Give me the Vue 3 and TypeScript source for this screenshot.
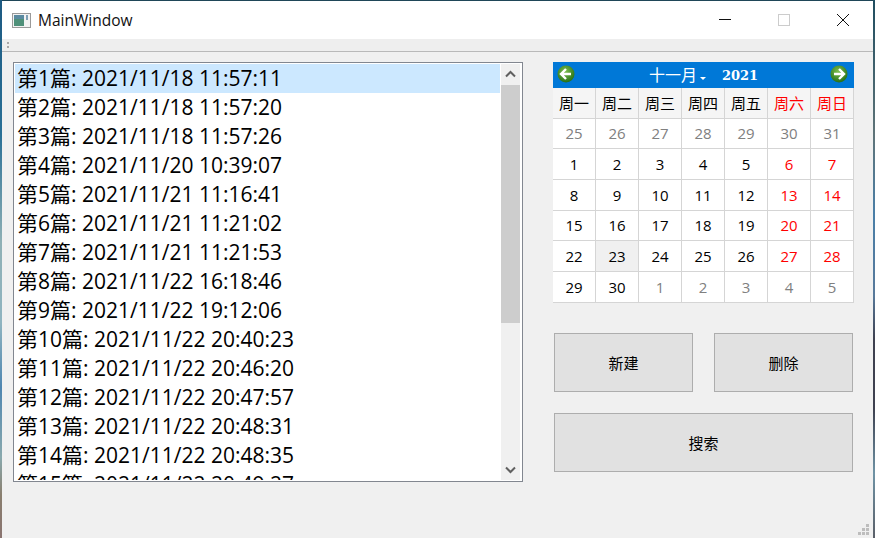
<template>
  <div class="desktop">
    <div class="window">
      <div class="titlebar">
        <svg class="app-icon" width="19" height="15" viewBox="0 0 19 15">
          <rect x="0.5" y="0.5" width="18" height="14" fill="#f2f2f2" stroke="#9a9a9a" />
          <rect x="2" y="2" width="10" height="11" fill="#4f9079" />
          <rect x="2" y="2" width="10" height="4" fill="#5a8aa0" />
          <rect x="14" y="2" width="2" height="5" fill="#7fa0b5" />
        </svg>
        <span class="title">MainWindow</span>
        <div class="controls">
          <svg class="ctl" width="46" height="38" viewBox="0 0 46 38">
            <line x1="17" y1="18.5" x2="29" y2="18.5" stroke="#111" />
          </svg>
          <svg class="ctl" width="46" height="38" viewBox="0 0 46 38">
            <rect x="17.5" y="13.5" width="11" height="11" fill="none" stroke="#ccc" />
          </svg>
          <svg class="ctl" width="46" height="38" viewBox="0 0 46 38">
            <path d="M17 13 L29 25 M29 13 L17 25" stroke="#111" fill="none" />
          </svg>
        </div>
      </div>
      <div class="toolbar">
        <span class="grip"><i></i><i></i></span>
      </div>

      <div class="content">
        <div class="list">
          <div class="rows">
            <div v-for="(row, i) in rows" :key="i" class="row" :class="{ selected: i === 0 }">{{ row }}</div>
          </div>
          <div class="scrollbar">
            <svg class="arrow" width="19" height="21" viewBox="0 0 19 21">
              <path d="M5 12.5 L9.5 8 L14 12.5" fill="none" stroke="#606060" stroke-width="2" />
            </svg>
            <div class="track"><div class="thumb"></div></div>
            <svg class="arrow" width="19" height="21" viewBox="0 0 19 21">
              <path d="M5 8.5 L9.5 13 L14 8.5" fill="none" stroke="#606060" stroke-width="2" />
            </svg>
          </div>
        </div>

        <div class="side">
          <div class="calendar">
            <div class="cal-head">
              <svg width="18" height="18" viewBox="0 0 18 18">
                <defs>
                  <radialGradient id="ball" cx="0.45" cy="0.35" r="0.7">
                    <stop offset="0" stop-color="#7fc04f" />
                    <stop offset="1" stop-color="#1f6a12" />
                  </radialGradient>
                </defs>
                <circle cx="9" cy="9" r="8.5" fill="url(#ball)" />
                <path d="M9 4 L4 9 L9 14 M4.5 9 H14" fill="none" stroke="#fff" stroke-width="2.4" />
              </svg>
              <div class="month-year">
                <span class="month">十一月</span>
                <span class="caret"></span>
                <span class="year">2021</span>
              </div>
              <svg width="18" height="18" viewBox="0 0 18 18">
                <circle cx="9" cy="9" r="8.5" fill="url(#ball)" />
                <path d="M9 4 L14 9 L9 14 M13.5 9 H4" fill="none" stroke="#fff" stroke-width="2.4" />
              </svg>
            </div>
            <div class="cal-grid">
              <div v-for="(d, i) in weekdays" :key="d" class="cell head" :class="{ red: i > 4 }">{{ d }}</div>
              <div
                v-for="(c, i) in cells"
                :key="`c-${i}`"
                class="cell"
                :class="{ muted: c.muted, red: !c.muted && i % 7 > 4, today: c.today }"
              >{{ c.day }}</div>
            </div>
          </div>

          <div class="buttons">
            <button class="btn">新建</button>
            <button class="btn">删除</button>
            <button class="btn wide">搜索</button>
          </div>
        </div>
      </div>

      <svg class="sizegrip" width="12" height="12" viewBox="0 0 12 12" fill="#bdbdbd">
        <rect x="8" y="0" width="3" height="3" />
        <rect x="4" y="4" width="3" height="3" />
        <rect x="8" y="4" width="3" height="3" />
        <rect x="0" y="8" width="3" height="3" />
        <rect x="4" y="8" width="3" height="3" />
        <rect x="8" y="8" width="3" height="3" />
      </svg>
    </div>
  </div>
</template>

<script setup lang="ts">
interface Cell {
  day: number;
  muted: boolean;
  today: boolean;
}

const times = [
  '2021/11/18 11:57:11',
  '2021/11/18 11:57:20',
  '2021/11/18 11:57:26',
  '2021/11/20 10:39:07',
  '2021/11/21 11:16:41',
  '2021/11/21 11:21:02',
  '2021/11/21 11:21:53',
  '2021/11/22 16:18:46',
  '2021/11/22 19:12:06',
  '2021/11/22 20:40:23',
  '2021/11/22 20:46:20',
  '2021/11/22 20:47:57',
  '2021/11/22 20:48:31',
  '2021/11/22 20:48:35',
  '2021/11/22 20:49:27',
];
const rows = times.map((t, i) => `第${i + 1}篇: ${t}`);

const weekdays = ['周一', '周二', '周三', '周四', '周五', '周六', '周日'];

const cells: Cell[] = [];
for (const d of [25, 26, 27, 28, 29, 30, 31]) cells.push({ day: d, muted: true, today: false });
for (let d = 1; d <= 30; d++) cells.push({ day: d, muted: false, today: d === 23 });
for (const d of [1, 2, 3, 4, 5]) cells.push({ day: d, muted: true, today: false });
</script>

<style>
html,
body {
  margin: 0;
  overflow: hidden;
}
</style>

<style scoped>
.desktop {
  width: 875px;
  height: 538px;
  padding: 1px 2px 0;
  box-sizing: border-box;
  background:
    linear-gradient(180deg, #1d5a82 0%, #2a7096 25%, #8fb0b5 45%, #8fb4c0 60%, #4f86b0 72%, #8aa9ad 85%, #8a7f6f 92%, #8a7470 100%) left / 2px 100% no-repeat,
    linear-gradient(180deg, #1f4d60 0%, #5f7478 25%, #4a7fa8 40%, #58799a 55%, #3e4150 63%, #3e4150 76%, #6f93a5 88%, #5a5f68 100%) right / 2px 100% no-repeat,
    #1f4658;
  font-family: "Open Sans", "Noto Sans CJK SC", sans-serif;
}

.window {
  position: relative;
  width: 871px;
  height: 537px;
  display: flex;
  flex-direction: column;
  background: #f0f0f0;
}

.titlebar {
  height: 38px;
  display: flex;
  align-items: center;
  background: #fff;
  padding-left: 10px;
}

.app-icon {
  margin-right: 7px;
}

.title {
  font-size: 15.5px;
  color: #111;
}

.controls {
  margin-left: auto;
  display: flex;
  gap: 13px;
  padding-right: 7px;
}

.toolbar {
  height: 12px;
  background: #eee;
  border-bottom: 1px solid #b9b9b9;
  display: flex;
  align-items: center;
  padding-left: 5px;
}

.grip {
  display: flex;
  flex-direction: column;
  gap: 2px;
}

.grip i {
  display: block;
  width: 2px;
  height: 2px;
  background: #a8a8a8;
}

.content {
  flex: 1;
  display: flex;
  align-items: flex-start;
  padding: 10px 0 0 11px;
}

.list {
  width: 510px;
  height: 420px;
  box-sizing: border-box;
  border: 1px solid #828790;
  padding: 1px 2px 1px 1px;
  background: #fff;
  display: flex;
}

.rows {
  flex: 1;
  min-width: 0;
  overflow: hidden;
  padding-right: 1px;
}

.row {
  height: 29px;
  line-height: 29px;
  padding-left: 2px;
  font-size: 21px;
  color: #000;
  white-space: nowrap;
}

.row.selected {
  background: #cce8ff;
}

.scrollbar {
  width: 19px;
  display: flex;
  flex-direction: column;
  background: #f0f0f0;
}

.arrow {
  display: block;
  flex: none;
}

.track {
  flex: 1;
}

.thumb {
  height: 238px;
  background: #cdcdcd;
}

.side {
  width: 301px;
  margin-left: 30px;
}

.calendar {
  width: 301px;
  background: #fff;
}

.cal-head {
  height: 26px;
  display: flex;
  align-items: center;
  justify-content: space-between;
  padding: 0 6px 2px 4px;
  box-sizing: border-box;
  background: #0078d7;
  color: #fff;
}

.month-year {
  display: flex;
  align-items: center;
  font-family: "DejaVu Serif", "Noto Sans CJK SC", serif;
  margin-left: 2px;
}

.month {
  font-size: 16px;
  font-family: "Noto Sans CJK SC", sans-serif;
}

.caret {
  width: 0;
  height: 0;
  margin: 9px 16px 0 3px;
  border-left: 3.5px solid transparent;
  border-right: 3.5px solid transparent;
  border-top: 3.5px solid #fff;
}

.year {
  font-size: 13px;
  font-weight: 700;
  line-height: 18px;
  margin-top: 3px;
}

.cal-grid {
  display: grid;
  grid-template-columns: repeat(7, 43px);
  grid-auto-rows: 30.67px;
}

.cell {
  display: flex;
  align-items: center;
  justify-content: center;
  box-sizing: border-box;
  border-right: 1px solid #d5d5d5;
  border-bottom: 1px solid #d5d5d5;
  font-size: 15px;
  color: #000;
  background: #fff;
}

.cell.head {
  background: #f5f5f5;
}

.cell.muted {
  color: #808080;
}

.cell.red {
  color: #f00;
}

.cell.today {
  background: #f0f0f0;
}

.buttons {
  display: grid;
  grid-template-columns: 139px 139px;
  grid-auto-rows: 59px;
  column-gap: 21px;
  row-gap: 21px;
  margin: 30px 0 0 1px;
}

.btn {
  border: 1px solid #adadad;
  background: #e1e1e1;
  color: #000;
  font-family: "Noto Sans CJK SC", sans-serif;
  font-size: 15px;
  padding: 0;
}

.btn.wide {
  grid-column: 1 / 3;
}

.sizegrip {
  position: absolute;
  right: 3px;
  bottom: 2px;
}
</style>
